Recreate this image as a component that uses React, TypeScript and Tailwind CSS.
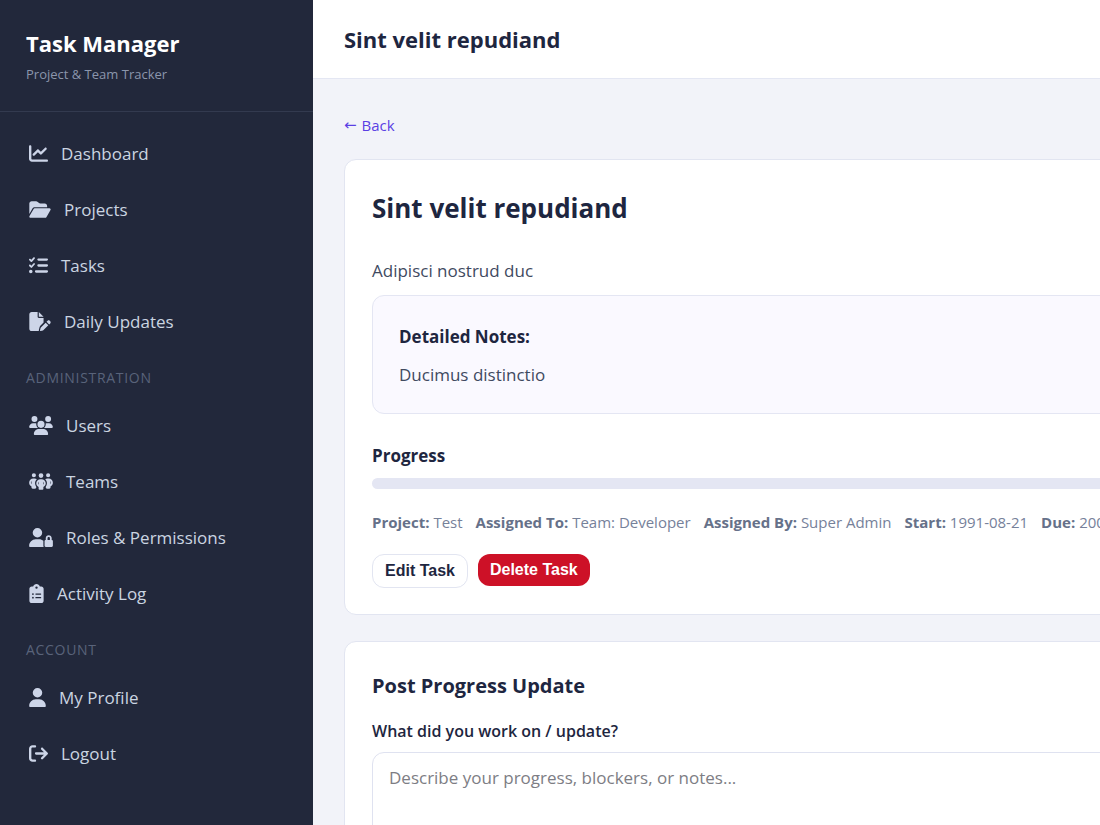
import type { ReactNode } from "react";
import type { IconType } from "react-icons";
import {
  FaArrowRightFromBracket,
  FaChartLine,
  FaClipboardList,
  FaFilePen,
  FaFolderOpen,
  FaListCheck,
  FaPeopleGroup,
  FaUser,
  FaUserLock,
  FaUsers,
} from "react-icons/fa6";

type NavEntry = { label: string; icon: IconType; width: string };

const mainNav: NavEntry[] = [
  { label: "Dashboard", icon: FaChartLine, width: "w-[19px]" },
  { label: "Projects", icon: FaFolderOpen, width: "w-[22px]" },
  { label: "Tasks", icon: FaListCheck, width: "w-[19px]" },
  { label: "Daily Updates", icon: FaFilePen, width: "w-[22px]" },
];

const adminNav: NavEntry[] = [
  { label: "Users", icon: FaUsers, width: "w-6" },
  { label: "Teams", icon: FaPeopleGroup, width: "w-6" },
  { label: "Roles & Permissions", icon: FaUserLock, width: "w-6" },
  { label: "Activity Log", icon: FaClipboardList, width: "w-[15px]" },
];

const accountNav: NavEntry[] = [
  { label: "My Profile", icon: FaUser, width: "w-[17px]" },
  { label: "Logout", icon: FaArrowRightFromBracket, width: "w-[19px]" },
];

const meta = [
  { label: "Project:", value: "Test" },
  { label: "Assigned To:", value: "Team: Developer" },
  { label: "Assigned By:", value: "Super Admin" },
  { label: "Start:", value: "1991-08-21" },
  { label: "Due:", value: "2007-03-14" },
];

function NavList({ items }: { items: NavEntry[] }) {
  return (
    <ul>
      {items.map(({ label, icon: Icon, width }) => (
        <li key={label}>
          <a href="#" className="flex h-14 items-center gap-[13px] pl-[29px] text-[17px] text-[#cbd5e1]">
            <Icon className={`mb-0.5 h-[19px] shrink-0 text-[#cdd5e8] ${width}`} aria-hidden="true" />
            {label}
          </a>
        </li>
      ))}
    </ul>
  );
}

function NavHeading({ children }: { children: ReactNode }) {
  return (
    <h2 className="flex h-12 items-center pt-1.5 pl-[26px] text-[14px] tracking-wider text-[#59637a] uppercase">
      {children}
    </h2>
  );
}

function Card({ children }: { children: ReactNode }) {
  return <section className="rounded-xl border border-[#e2e5f1] bg-white px-[27px]">{children}</section>;
}

export default function App() {
  return (
    <div className="flex h-screen overflow-hidden bg-[#f2f3f9] font-['Open_Sans','Noto_Sans',sans-serif] text-[#1e2640]">
      <aside className="w-[313px] shrink-0 overflow-y-auto bg-[#22283b] [scrollbar-width:none]">
        <div className="h-28 border-b border-[#333a4f] pt-7 pl-[26px]">
          <p className="text-[22px] leading-[30px] font-bold text-white">Task Manager</p>
          <p className="text-[13px] leading-8 text-[#8b96ac]">Project &amp; Team Tracker</p>
        </div>
        <nav className="pt-3.5" aria-label="Main">
          <NavList items={mainNav} />
          <NavHeading>Administration</NavHeading>
          <NavList items={adminNav} />
          <NavHeading>Account</NavHeading>
          <NavList items={accountNav} />
        </nav>
      </aside>

      <div className="min-w-[960px] grow overflow-y-auto [scrollbar-width:none]">
        <header className="flex h-[79px] items-center border-b border-[#e4e7f3] bg-white px-[31px]">
          <h1 className="text-[22px] font-bold">Sint velit repudiand</h1>
        </header>

        <main className="px-[31px] pt-8">
          <a href="#" className="flex h-7 w-fit items-center gap-[5px] text-[15px] text-[#5b3fe4]">
            <span className="font-['DejaVu_Sans',sans-serif]">←</span>
            Back
          </a>

          <div className="mt-5 flex flex-col gap-[26px]">
            <Card>
              <h2 className="pt-7 text-[26px] leading-10 font-bold">Sint velit repudiand</h2>
              <p className="mt-[27px] text-[17px] leading-8 text-[#3f4a5f]">Adipisci nostrud duc</p>

              <div className="mt-2 rounded-xl border border-[#e4e6f3] bg-[#faf9ff] px-[26px] pt-[22px] pb-[19px]">
                <p className="text-[17px] leading-[38px] font-bold">Detailed Notes:</p>
                <p className="text-[17px] leading-[38px] text-[#3f4a5f]">Ducimus distinctio</p>
              </div>

              <h3 className="mt-6 text-[17px] leading-9 font-bold">Progress</h3>
              <div
                role="progressbar"
                aria-label="Progress"
                aria-valuenow={0}
                className="mt-1 h-[11px] rounded-full bg-[#e4e6f3]"
              />

              <div className="mt-[21px] flex gap-[13px] text-[15px] leading-6 whitespace-nowrap text-[#76819a]">
                {meta.map(({ label, value }) => (
                  <span key={label}>
                    <strong className="font-bold text-[#667189]">{label}</strong> {value}
                  </span>
                ))}
              </div>

              <div className="mt-5 flex items-start gap-2.5 pb-[26px] font-['Liberation_Sans',Arial,sans-serif] text-base font-bold">
                <button type="button" className="h-[34px] rounded-xl border border-[#e2e5f1] bg-white px-3">
                  Edit Task
                </button>
                <button type="button" className="h-8 rounded-xl bg-[#cd1127] px-3 text-white">
                  Delete Task
                </button>
              </div>
            </Card>

            <Card>
              <h2 className="pt-6 text-[20px] leading-10 font-bold">Post Progress Update</h2>
              <label htmlFor="update" className="mt-[11px] block text-[16px] leading-7 font-semibold">
                What did you work on / update?
              </label>
              <textarea
                id="update"
                rows={5}
                placeholder="Describe your progress, blockers, or notes..."
                className="mt-[7px] mb-6 block w-full resize-none rounded-xl border border-[#dfe2f0] bg-white px-4 py-[11px] text-[17px] leading-7 placeholder:text-[#7d7d84]"
              />
            </Card>
          </div>
        </main>
      </div>
    </div>
  );
}
